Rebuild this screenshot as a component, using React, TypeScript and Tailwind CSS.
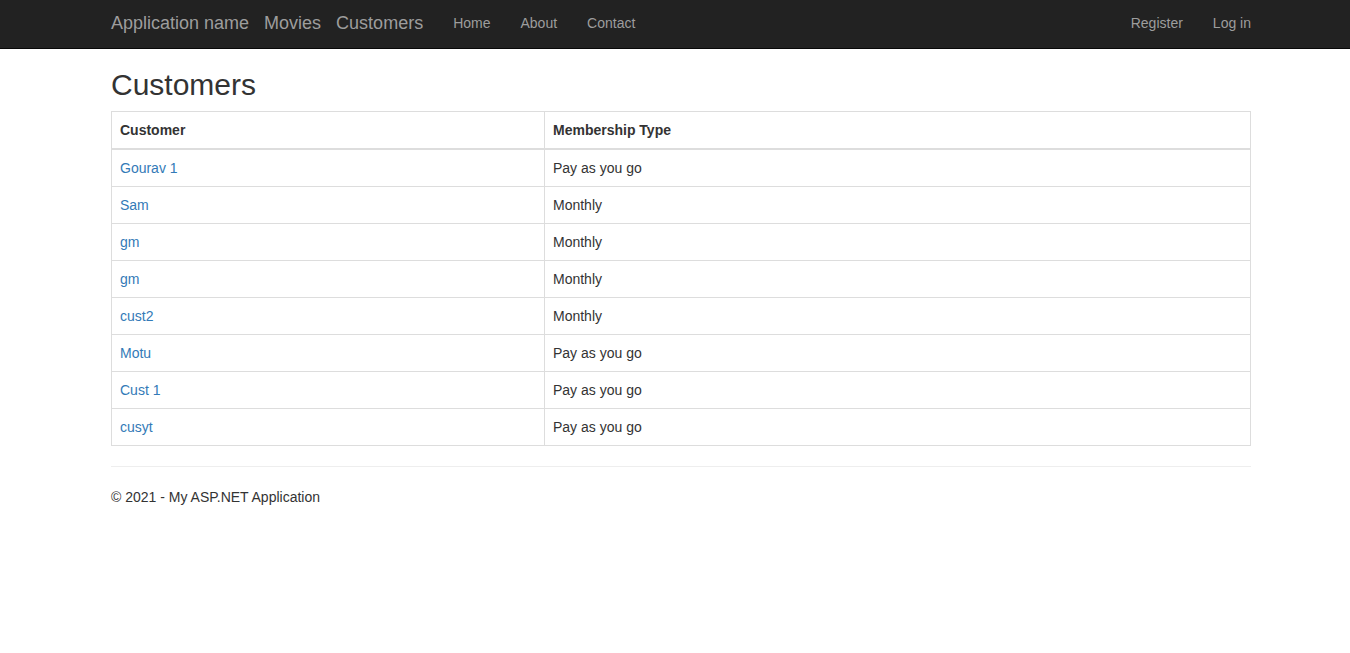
const customers = [
  { name: "Gourav 1", membership: "Pay as you go" },
  { name: "Sam", membership: "Monthly" },
  { name: "gm", membership: "Monthly" },
  { name: "gm", membership: "Monthly" },
  { name: "cust2", membership: "Monthly" },
  { name: "Motu", membership: "Pay as you go" },
  { name: "Cust 1", membership: "Pay as you go" },
  { name: "cusyt", membership: "Pay as you go" },
];

function Navbar() {
  return (
    <div className="h-[49px] border-b border-[#080808] bg-[#222222]">
      <div className="ml-[111px] flex h-[48px] w-[1140px] items-center pb-[2px] text-[#9d9d9d]">
        <div className="flex gap-[15px] text-[18px] leading-[20px]">
          <a href="#">Application name</a>
          <a href="#">Movies</a>
          <a href="#">Customers</a>
        </div>
        <ul className="ml-[30px] flex gap-[30px] text-[14px] leading-[20px]">
          <li><a href="#">Home</a></li>
          <li><a href="#">About</a></li>
          <li><a href="#">Contact</a></li>
        </ul>
        <ul className="ml-auto flex gap-[30px] text-[14px] leading-[20px]">
          <li><a href="#">Register</a></li>
          <li><a href="#">Log in</a></li>
        </ul>
      </div>
    </div>
  );
}

export default function App() {
  return (
    <div className="min-h-[653px] bg-white font-['Liberation_Sans',Arial,sans-serif] text-[14px] leading-[20px] text-[#333333]">
      <Navbar />
      <div className="ml-[111px] w-[1140px] pt-[19px]">
        <h2 className="mb-[10px] text-[30px] leading-[33px]">Customers</h2>
        <table className="w-full border-collapse border border-[#dddddd]">
          <thead>
            <tr>
              <th className="w-[433px] border border-b-2 border-[#dddddd] p-[8px] text-left font-bold">
                Customer
              </th>
              <th className="border border-b-2 border-[#dddddd] p-[8px] text-left font-bold">
                Membership Type
              </th>
            </tr>
          </thead>
          <tbody>
            {customers.map((c, i) => (
              <tr key={i}>
                <td className="border border-[#dddddd] p-[8px]">
                  <a href="#" className="text-[#337ab7]">
                    {c.name}
                  </a>
                </td>
                <td className="border border-[#dddddd] p-[8px]">{c.membership}</td>
              </tr>
            ))}
          </tbody>
        </table>
        <hr className="mt-[20px] mb-[20px] border-t border-[#eeeeee]" />
        <footer>
          <p>© 2021 - My ASP.NET Application</p>
        </footer>
      </div>
    </div>
  );
}
